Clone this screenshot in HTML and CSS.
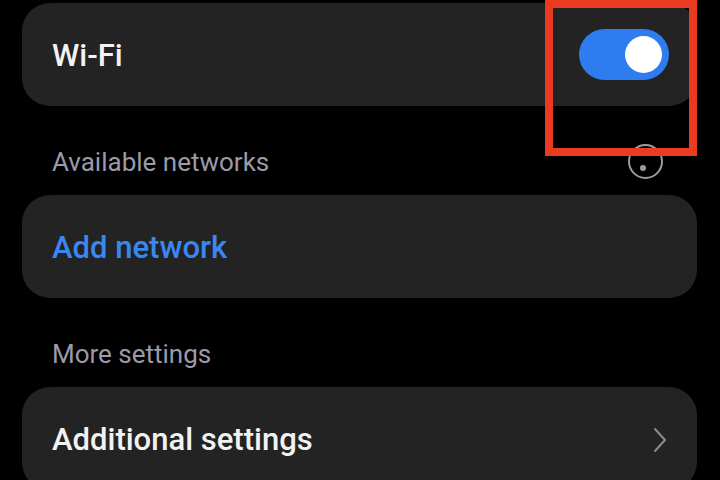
FILE: index.html
```html
<!DOCTYPE html>
<html lang="en">
<head>
    <meta charset="UTF-8">
    <meta name="viewport" content="width=device-width, initial-scale=1.0">
    <title>Wi-Fi</title>
    <link rel="stylesheet" href="styles.css">
</head>
<body>

<div class="screen">

    <!-- Wi-Fi switch -->
    <div class="card">
        <span class="card-title">Wi-Fi</span>
        <span class="toggle on"><span class="knob"></span></span>
    </div>

    <!-- Available networks -->
    <div class="section">
        <span>Available networks</span>
        <span class="spinner"><span class="dot"></span></span>
    </div>

    <div class="card">
        <span class="card-title link">Add network</span>
    </div>

    <!-- More settings -->
    <div class="section">
        <span>More settings</span>
    </div>

    <div class="card">
        <span class="card-title">Additional settings</span>
        <svg class="chevron" width="14" height="26" viewBox="0 0 14 26">
            <path d="M2 2 L12 13 L2 24" fill="none" stroke="#8a8a8a" stroke-width="2" stroke-linecap="round" stroke-linejoin="round"/>
        </svg>
    </div>

    <!-- highlight box -->
    <div class="highlight"></div>

</div>

</body>
</html>
```

FILE: styles.css
```css
body {
    margin: 0;
    background-color: #000;
    font-family: Roboto, "Liberation Sans", sans-serif;
}

.screen {
    position: relative;
    width: 720px;
    height: 480px;
    overflow: hidden;
    padding: 3px 23px 0 22px;
    box-sizing: border-box;
}

.card {
    display: flex;
    align-items: center;
    justify-content: space-between;
    height: 103px;
    padding: 2px 28px 0 30px;
    background-color: #232323;
    border-radius: 28px;
    box-sizing: border-box;
}

.card-title {
    color: #f2f2f2;
    font-size: 31px;
    font-weight: 500;
}

.card-title.link {
    color: #3a86f2;
}

.section {
    display: flex;
    align-items: center;
    justify-content: space-between;
    height: 89px;
    padding: 22px 34px 0 30px;
    box-sizing: border-box;
    color: #9a9aa8;
    font-size: 26px;
}

.toggle {
    position: relative;
    width: 90px;
    height: 51px;
    margin-top: -2px;
    border-radius: 26px;
    background-color: #2f7cf0;
}

.toggle .knob {
    position: absolute;
    top: 7px;
    right: 7px;
    width: 37px;
    height: 37px;
    border-radius: 50%;
    background-color: #fff;
}

.spinner {
    position: relative;
    width: 31px;
    height: 31px;
    border: 2px solid #9c9c9c;
    border-radius: 50%;
}

.spinner .dot {
    position: absolute;
    left: 10px;
    top: 19px;
    width: 6px;
    height: 6px;
    border-radius: 50%;
    background-color: #9c9c9c;
}

.chevron {
    margin-right: 2px;
}

.highlight {
    position: absolute;
    left: 545px;
    top: 0;
    width: 152px;
    height: 156px;
    border: 8px solid #ea3a1f;
    box-sizing: border-box;
}
```
